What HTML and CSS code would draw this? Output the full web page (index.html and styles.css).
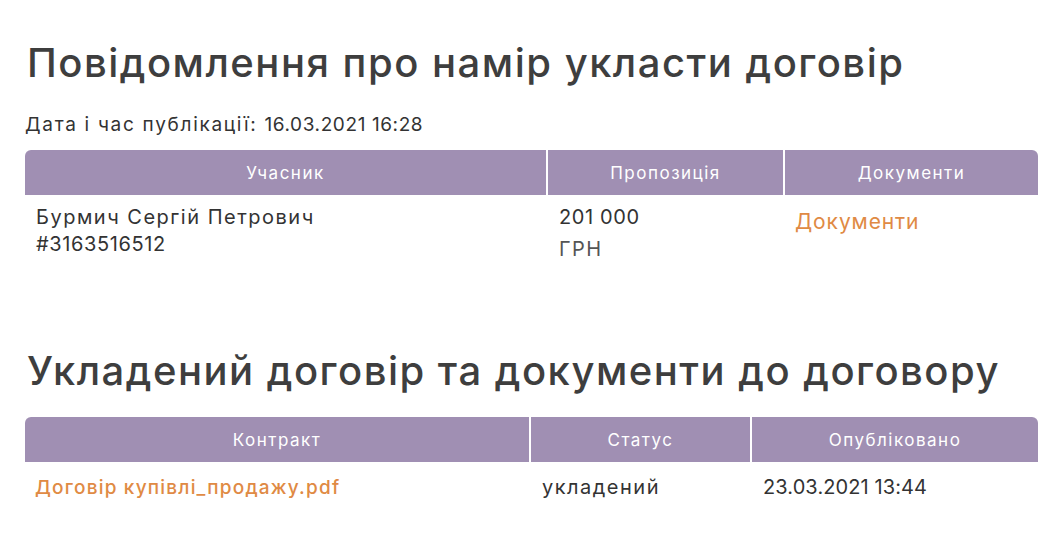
FILE: index.html
```html
<!DOCTYPE html>
<html lang="uk">
<head>
<meta charset="utf-8">
<link rel="stylesheet" href="styles.css">
</head>
<body>
<main class="page">
  <section class="block">
    <h1 class="title">Повідомлення про намір укласти договір</h1>
    <p class="pubdate">Дата і час публікації: <span class="num">16.03.2021 16:28</span></p>
    <div class="table t1">
      <div class="th">Учасник</div>
      <div class="th">Пропозиція</div>
      <div class="th">Документи</div>
      <div class="td">Бурмич Сергій Петрович<br><span class="num">#3163516512</span></div>
      <div class="td"><div class="amount num">201 000</div><div class="currency">ГРН</div></div>
      <div class="td"><a class="link docs">Документи</a></div>
    </div>
  </section>
  <section class="block second">
    <h2 class="title">Укладений договір та документи до договору</h2>
    <div class="table t2">
      <div class="th">Контракт</div>
      <div class="th">Статус</div>
      <div class="th">Опубліковано</div>
      <div class="td r2"><a class="link file">Договір купівлі_продажу.pdf</a></div>
      <div class="td r2">укладений</div>
      <div class="td r2"><span class="num date">23.03.2021 13:44</span></div>
    </div>
  </section>
</main>
</body>
</html>
```
FILE: styles.css
```css
html, body { margin: 0; padding: 0; background: #fff; }
body { font-family: Inter, "Noto Sans", sans-serif; color: #333; }
.page { padding: 0 8px 0 25px; }
.title { margin: 0; font-size: 40px; font-weight: 500; color: #3e3e3e; padding-left: 2px; line-height: 48px; letter-spacing: 1.5px; }
h1.title { padding-top: 39px; }
.pubdate { margin: 26px 0 14px; font-size: 19px; line-height: 23px; letter-spacing: 1.7px; color: #333; }
.num { letter-spacing: 0.6px; }
.date { letter-spacing: 0.1px; }
.table { display: grid; column-gap: 2px; }
.t1 { grid-template-columns: 521px 235px 253px; }
.t2 { grid-template-columns: 504px 219px 286px; margin-top: 22px; }
.th { background: #a08fb3; color: #fff; height: 45px; display: flex; align-items: center; justify-content: center; font-size: 17px; letter-spacing: 1.5px; }
.th:first-child { border-top-left-radius: 6px; }
.th:nth-child(3) { border-top-right-radius: 6px; }
.td { padding: 9px 11px 0; font-size: 20px; line-height: 27px; color: #333; letter-spacing: 1.5px; }
.r2 { padding-top: 12px; }
.currency { color: #555; margin-top: 5px; }
.link { color: #e08a44; text-decoration: none; }
.docs { font-size: 21px; display: inline-block; margin-top: 4px; letter-spacing: 0.9px; margin-left: -1px; }
.file { font-size: 19px; font-weight: 500; letter-spacing: 1.2px; margin-left: -1px; }
.second { padding-top: 84px; }
```
